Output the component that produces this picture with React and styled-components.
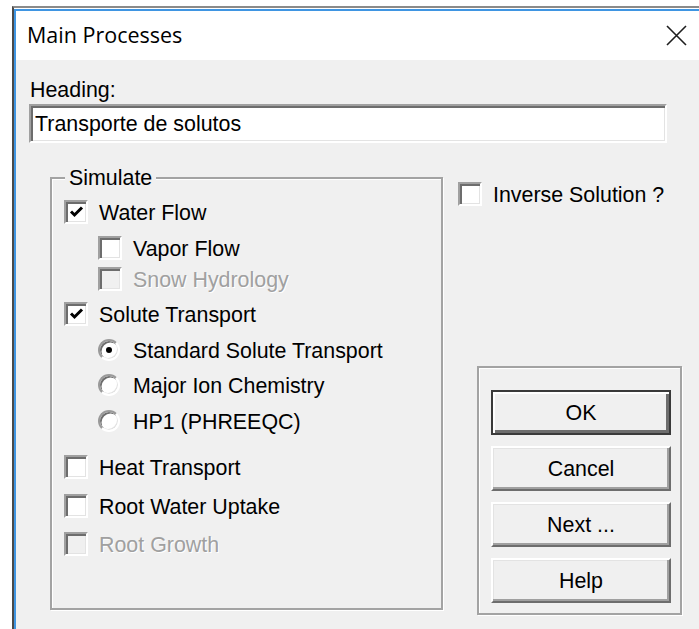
import React from 'react';
import styled, { createGlobalStyle } from 'styled-components';

const GlobalStyle = createGlobalStyle`
  html, body {
    margin: 0;
    padding: 0;
    background: #ffffff;
    overflow: hidden;
  }
  body {
    font-family: 'Liberation Sans', Arial, sans-serif;
  }
`;

const Window = styled.div`
  margin: 6px 0 0 12px;
  height: calc(100vh - 6px);
  box-sizing: border-box;
  border-top: 2px solid #8a8a8a;
  border-left: 2px solid #4a4a4a;
  padding-top: 1px;
  display: flex;
  flex-direction: column;
`;

const Frame = styled.div`
  flex: 1;
  display: flex;
  flex-direction: column;
  border-top: 2px solid #3f95e2;
  border-left: 2px solid #3f95e2;
`;

const TitleBar = styled.div`
  height: 49px;
  background: #ffffff;
  display: flex;
  align-items: center;
  justify-content: space-between;
  padding: 0 12px 2px 11px;
  box-sizing: border-box;
`;

const Title = styled.span`
  font-family: 'Open Sans', 'Noto Sans', sans-serif;
  font-size: 21.5px;
  color: #000;
`;

const CloseButton = styled.span`
  width: 21px;
  height: 21px;
  display: flex;
  margin-top: 2px;
`;

const Body = styled.div`
  flex: 1;
  background: #f0f0f0;
  padding: 18px 0 0 13px;
  font-size: 21.4px;
  color: #000;
`;

const Label = styled.div`
  line-height: 24px;
  height: 24px;
  padding-left: 1px;
`;

const TextInput = styled.div`
  margin-top: 2px;
  width: 638px;
  height: 39px;
  box-sizing: border-box;
  background: #ffffff;
  border: 2px solid;
  border-color: #a0a0a0 #ffffff #ffffff #a0a0a0;
  box-shadow: inset 2px 2px 0 #6d6d6d, inset -1px -1px 0 #e3e3e3;
  display: flex;
  align-items: center;
  padding: 1px 0 0 4px;
  line-height: 24px;
`;

const Lower = styled.div`
  display: flex;
  align-items: flex-start;
  margin: 34px 0 0 21px;
`;

const Etched = styled.div`
  position: relative;
  box-sizing: border-box;
  border: 2px solid #a3a3a3;
  box-shadow: 1px 1px 0 #ffffff, inset 1px 1px 0 #ffffff;
`;

const GroupBox = styled(Etched)`
  width: 393px;
  padding: 21px 0 53px 12px;
`;

const Legend = styled.span`
  position: absolute;
  top: -13px;
  left: 13px;
  padding: 0 4px;
  background: #f0f0f0;
  line-height: 24px;
`;

const Row = styled.div`
  display: flex;
  align-items: center;
  height: 23px;
  margin-top: ${p => p.$mt || 0}px;
  padding-left: ${p => p.$level * 34}px;
`;

const RowText = styled.span`
  margin-left: ${p => p.$gap}px;
  line-height: 24px;
  padding-top: 3px;
  white-space: nowrap;
  color: ${p => (p.$disabled ? '#a0a0a0' : '#000')};
  text-shadow: ${p => (p.$disabled ? '1px 1px 0 #ffffff' : 'none')};
`;

const CheckBox = styled.span`
  width: 24px;
  height: 24px;
  flex: none;
  box-sizing: border-box;
  background: ${p => (p.$disabled ? '#f0f0f0' : '#ffffff')};
  border: 2px solid;
  border-color: #a0a0a0 #ffffff #ffffff #a0a0a0;
  box-shadow: inset 2px 2px 0 #6d6d6d, inset -1px -1px 0 #e3e3e3;
  display: flex;
  align-items: center;
  justify-content: center;
`;

const Radio = styled.span`
  width: 22px;
  height: 22px;
  flex: none;
  box-sizing: border-box;
  border-radius: 50%;
  background: #ffffff;
  border: 2px solid;
  border-color: #9a9a9a #ffffff #ffffff #9a9a9a;
  box-shadow: inset 1.5px 1.5px 0 #6d6d6d, inset -1px -1px 0 #e3e3e3;
  display: flex;
  align-items: center;
  justify-content: center;

  &::after {
    content: '';
    width: 6px;
    height: 6px;
    border-radius: 50%;
    background: ${p => (p.$on ? '#000' : 'transparent')};
  }
`;

const RightColumn = styled.div`
  display: flex;
  flex-direction: column;
  margin-left: 15px;
  padding-top: 5px;
`;

const ButtonPanel = styled(Etched)`
  width: 205px;
  margin: 161px 0 0 19px;
  padding: 22px 11px 10px 12px;
  display: flex;
  flex-direction: column;
  gap: 11px;
`;

const Button = styled.div`
  width: 180px;
  height: 45px;
  box-sizing: border-box;
  background: #f0f0f0;
  display: flex;
  align-items: center;
  justify-content: center;
  line-height: 24px;
  padding-top: 1px;
  border: 2px solid;
  border-color: ${p => (p.$default ? '#3a3a3a' : '#ffffff #6d6d6d #6d6d6d #ffffff')};
  box-shadow: ${p =>
    p.$default
      ? 'inset 2px 2px 0 #ffffff, inset -3px -3px 0 #6d6d6d'
      : 'inset -2px -2px 0 #a0a0a0, inset 1px 1px 0 #e3e3e3'};
`;

const Check = () => (
  <svg width="15" height="13" viewBox="0 0 15 13">
    <path d="M2 6.5 L5.5 10 L13 2.5" fill="none" stroke="#000" strokeWidth="3" />
  </svg>
);

const Option = ({ item }) => {
  const control =
    item.kind === 'radio' ? (
      <Radio $on={item.checked} />
    ) : (
      <CheckBox $disabled={item.disabled}>{item.checked && <Check />}</CheckBox>
    );
  return (
    <Row $mt={item.mt} $level={item.level}>
      {control}
      <RowText $gap={item.kind === 'radio' ? 13 : 11} $disabled={item.disabled}>
        {item.label}
      </RowText>
    </Row>
  );
};

const simulate = [
  { label: 'Water Flow', level: 0, checked: true },
  { label: 'Vapor Flow', level: 1, mt: 13 },
  { label: 'Snow Hydrology', level: 1, mt: 8, disabled: true },
  { label: 'Solute Transport', level: 0, mt: 12, checked: true },
  { label: 'Standard Solute Transport', level: 1, mt: 13, kind: 'radio', checked: true },
  { label: 'Major Ion Chemistry', level: 1, mt: 12, kind: 'radio' },
  { label: 'HP1 (PHREEQC)', level: 1, mt: 13, kind: 'radio' },
  { label: 'Heat Transport', level: 0, mt: 23 },
  { label: 'Root Water Uptake', level: 0, mt: 16 },
  { label: 'Root Growth', level: 0, mt: 15, disabled: true },
];

export default function App() {
  return (
    <>
      <GlobalStyle />
      <Window>
        <Frame>
          <TitleBar>
            <Title>Main Processes</Title>
            <CloseButton>
              <svg width="21" height="21" viewBox="0 0 21 21">
                <path d="M1 1 L20 20 M20 1 L1 20" stroke="#1e1e1e" strokeWidth="1.6" />
              </svg>
            </CloseButton>
          </TitleBar>
          <Body>
            <Label>Heading:</Label>
            <TextInput>Transporte de solutos</TextInput>
            <Lower>
              <GroupBox>
                <Legend>Simulate</Legend>
                {simulate.map(item => (
                  <Option key={item.label} item={item} />
                ))}
              </GroupBox>
              <RightColumn>
                <Option item={{ label: 'Inverse Solution ?', level: 0 }} />
                <ButtonPanel>
                  <Button $default>OK</Button>
                  <Button>Cancel</Button>
                  <Button>Next ...</Button>
                  <Button>Help</Button>
                </ButtonPanel>
              </RightColumn>
            </Lower>
          </Body>
        </Frame>
      </Window>
    </>
  );
}
